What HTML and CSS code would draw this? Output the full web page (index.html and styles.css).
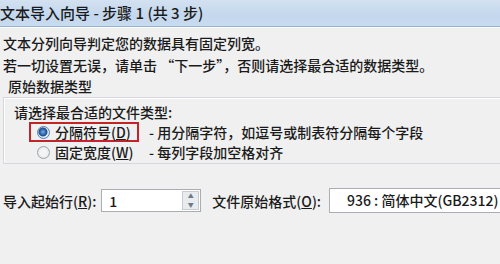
FILE: index.html
```html
<!DOCTYPE html>
<html>

<head>
  <meta charset="UTF-8">
  <title>文本导入向导</title>
  <link rel="stylesheet" href="styles.css">
</head>

<body>
  <div class="titlebar">文本导入向导 - 步骤 1 (共 3 步)</div>

  <div class="content">
    <p class="linha">文本分列向导判定您的数据具有固定列宽。</p>
    <p class="linha">若一切设置无误，请单击 “下一步”，否则请选择最合适的数据类型。</p>
    <p class="linha rotulo">原始数据类型</p>

    <div class="grupo">
      <p class="pergunta">请选择最合适的文件类型:</p>

      <div class="opcao">
        <div class="marcado">
          <span class="radio ativo"></span>
          <span>分隔符号(<u>D</u>)</span>
        </div>
        <span class="desc">- 用分隔字符，如逗号或制表符分隔每个字段</span>
      </div>

      <div class="opcao">
        <div class="normal">
          <span class="radio"></span>
          <span>固定宽度(<u>W</u>)</span>
        </div>
        <span class="desc">- 每列字段加空格对齐</span>
      </div>
    </div>

    <div class="rodape">
      <span class="lbl">导入起始行(<u>R</u>):</span>
      <div class="spin">
        <span class="valor">1</span>
        <div class="setas">
          <span class="seta">▲</span>
          <span class="seta">▼</span>
        </div>
      </div>
      <span class="lbl fmt">文件原始格式(<u>O</u>):</span>
      <div class="combo">936 : 简体中文(GB2312)</div>
    </div>
  </div>
</body>

</html>
```

FILE: styles.css
```css
* {
  margin: 0;
  padding: 0;
  box-sizing: border-box;
}

body {
  width: 500px;
  height: 264px;
  overflow: hidden;
  background-color: #f0f0f0;
  font-family: "Noto Sans CJK SC", "DejaVu Sans", sans-serif;
  font-size: 14px;
  font-weight: 500;
  color: #1a1a1a;
}

.titlebar {
  height: 27px;
  line-height: 25px;
  font-size: 15px;
  color: #1a1a1a;
  background: linear-gradient(#d3e1f1, #c4d7ed 60%, #c9dbef);
  border-bottom: 1px solid #9fb1c6;
  box-shadow: 0 1px 0 #ffffff;
}

.content {
  padding: 5px 0 0 3px;
}

.linha {
  line-height: 22px;
  white-space: nowrap;
}

.linha q,
.aspas {
  letter-spacing: 2px;
}

.rotulo {
  padding-left: 5px;
  line-height: 21px;
}

/* a caixa continua para alem da borda direita */
.grupo {
  border: 1px solid #d5d9dd;
  border-right: none;
  box-shadow: inset 1px 1px 0 #fff;
  padding: 4px 0 1px 10px;
}

.pergunta {
  line-height: 20px;
}

.opcao {
  display: flex;
  align-items: center;
  height: 20px;
  white-space: nowrap;
}

.marcado,
.normal {
  display: flex;
  align-items: center;
  gap: 5px;
  flex-shrink: 0;
  width: 110px;
  height: 20px;
  margin-left: 15px;
  padding-left: 8px;
}

.marcado {
  border: 2px solid #c4232a;
  padding-left: 6px;
}

.desc {
  margin-left: 10px;
}

.radio {
  width: 13px;
  height: 13px;
  border-radius: 50%;
  border: 1px solid #9aa3ad;
  background: radial-gradient(circle, #f4f4f4 40%, #dcdcdc);
}

.ativo {
  border-color: #5a7ea6;
  background: radial-gradient(circle at 45% 45%, #7ab0e4 0, #2b62a8 3px, #1c4f8e 4px, #e6eef6 5px, #d3dce6);
}

.rodape {
  display: flex;
  align-items: center;
  margin-top: 24px;
}

.lbl {
  white-space: nowrap;
  flex-shrink: 0;
}

.spin {
  display: flex;
  align-items: center;
  justify-content: space-between;
  flex-shrink: 0;
  width: 100px;
  height: 23px;
  margin-left: 5px;
  background-color: #fff;
  border: 1px solid #abadb3;
  padding: 0 1px 0 7px;
}

.setas {
  display: flex;
  flex-direction: column;
  width: 17px;
  height: 19px;
  background-color: #e9ecef;
  border: 1px solid #c8ccd1;
}

.seta {
  flex: 1;
  font-size: 6px;
  line-height: 8px;
  text-align: center;
  color: #6d7a89;
}

.fmt {
  margin-left: 11px;
}

.combo {
  flex: 1;
  min-width: 0;
  height: 25px;
  line-height: 23px;
  margin-left: 8px;
  padding-left: 17px;
  background-color: #fff;
  border: 1px solid #abadb3;
  border-right: none;
  white-space: nowrap;
  overflow: hidden;
}
```
